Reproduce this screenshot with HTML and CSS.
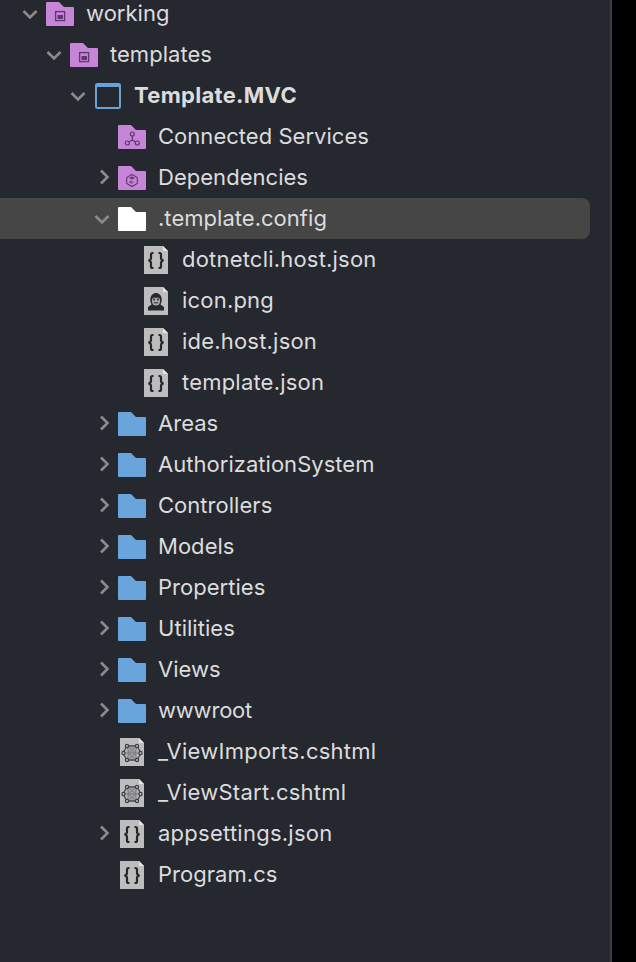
FILE: index.html
```html
<!DOCTYPE html>
<html lang="en">
<head>
<meta charset="utf-8">
<title>Solution tree</title>
<link rel="stylesheet" href="styles.css">
</head>
<body>
<svg class="defs" width="0" height="0" aria-hidden="true">
  <defs>
    <path id="folder" d="M1 0H13L18 5H27A1 1 0 0 1 28 6V23A1 1 0 0 1 27 24H1A1 1 0 0 1 0 23V1A1 1 0 0 1 1 0Z"/>
    <path id="sheet" d="M0 0H19L24 5V28H0Z"/>
    <g id="open"><path d="M1.500 2L8 8.500L14.500 2" fill="none" stroke="#8b8b8b" stroke-width="2.600"/></g>
    <g id="closed"><path d="M2 1.500L8.500 8L2 14.500" fill="none" stroke="#8b8b8b" stroke-width="2.600"/></g>
    <g id="braces" fill="none" stroke="#26282f" stroke-width="2.200">
      <path d="M9.500 7H8.500Q7 7 7 8.500V12Q7 14 4.500 14.500Q7 15 7 17V20.500Q7 22 8.500 22H9.500"/>
      <path d="M14.500 7H15.500Q17 7 17 8.500V12Q17 14 19.500 14.500Q17 15 17 17V20.500Q17 22 15.500 22H14.500"/>
    </g>
    <g id="sheet-corner"><path d="M19 0L24 5H19Z" fill="#e6e6e6"/></g>
    <g id="razor" fill="none">
      <circle cx="12" cy="15" r="6" fill="#a2a2a2"/>
      <path d="M7 8H17L21 15L17 22H7L3 15Z" stroke="#46484d" stroke-width="1.300"/>
      <path d="M7 8L12 11.500L17 8M3 15H21M7 22L12 18.500L17 22M7 8L9 15L7 22M17 8L15 15L17 22M9 15L12 11.500L15 15L12 18.500Z" stroke="#7d7f82" stroke-width="1"/>
      <g fill="#bdbdbd" stroke="#3b3d42" stroke-width="1.200">
        <circle cx="7" cy="8" r="1.600"/><circle cx="17" cy="8" r="1.600"/>
        <circle cx="3.500" cy="15" r="1.600"/><circle cx="20.500" cy="15" r="1.600"/>
        <circle cx="7" cy="22" r="1.600"/><circle cx="17" cy="22" r="1.600"/>
      </g>
    </g>
  </defs>
</svg>
<main class="window">
  <nav class="tree">
    <div class="row lvl-0">
      <svg class="chev" width="24" height="18" viewBox="-4 -4 24 18"><use href="#open"/></svg>
      <span class="icon"><svg width="28" height="24" viewBox="0 0 28 24"><use href="#folder" fill="#c685d8"/><g fill="none" stroke="#5c3a6b" stroke-width="1.300"><rect x="9.600" y="9.600" width="9" height="9"/></g><rect x="11.500" y="13" width="5.500" height="4" fill="#5c3a6b"/></svg></span>
      <span class="label">working</span>
    </div>
    <div class="row lvl-1">
      <svg class="chev" width="24" height="18" viewBox="-4 -4 24 18"><use href="#open"/></svg>
      <span class="icon"><svg width="28" height="24" viewBox="0 0 28 24"><use href="#folder" fill="#c685d8"/><g fill="none" stroke="#5c3a6b" stroke-width="1.300"><rect x="9.600" y="9.600" width="9" height="9"/></g><rect x="11.500" y="13" width="5.500" height="4" fill="#5c3a6b"/></svg></span>
      <span class="label">templates</span>
    </div>
    <div class="row lvl-2">
      <svg class="chev" width="24" height="18" viewBox="-4 -4 24 18"><use href="#open"/></svg>
      <span class="icon"><svg width="26" height="26" viewBox="0 0 26 26"><rect x="1" y="1" width="24" height="24" rx="1.500" fill="none" stroke="#66a3d9" stroke-width="2"/><rect x="1" y="1" width="24" height="3" fill="#66a3d9"/></svg></span>
      <span class="label label-bold">Template.MVC</span>
    </div>
    <div class="row lvl-3">
      <span class="chev"></span>
      <span class="icon"><svg width="28" height="24" viewBox="0 0 28 24"><use href="#folder" fill="#c685d8"/><g fill="none" stroke="#5c3a6b" stroke-width="1.200"><circle cx="14.300" cy="9" r="2"/><circle cx="9.300" cy="18" r="2"/><circle cx="19.300" cy="18" r="2"/><path d="M14.300 11V15M14.300 15L11 17M14.300 15L17.600 17"/></g></svg></span>
      <span class="label">Connected Services</span>
    </div>
    <div class="row lvl-3">
      <svg class="chev" width="24" height="18" viewBox="-9 0 24 18"><use href="#closed"/></svg>
      <span class="icon"><svg width="28" height="24" viewBox="0 0 28 24"><use href="#folder" fill="#c685d8"/><g fill="none" stroke="#5c3a6b" stroke-width="1.100"><path d="M14 8.500L19.300 11.500V17.500L14 20.500L8.700 17.500V11.500Z"/></g><path d="M11 12L14 13.500L17 12L14 10.500ZM13.500 14.500V18L11 16ZM14.500 14.500V18L15.500 16Z" fill="#5c3a6b"/></svg></span>
      <span class="label">Dependencies</span>
    </div>
    <div class="row lvl-3 row-selected">
      <svg class="chev" width="24" height="18" viewBox="-4 -4 24 18"><use href="#open"/></svg>
      <span class="icon"><svg width="28" height="24" viewBox="0 0 28 24"><use href="#folder" fill="#fff"/></svg></span>
      <span class="label">.template.config</span>
    </div>
    <div class="row lvl-4">
      <span class="chev"></span>
      <span class="icon"><svg width="24" height="28" viewBox="0 0 24 28"><use href="#sheet" fill="#bdbdbd"/><use href="#sheet-corner"/><use href="#braces"/></svg></span>
      <span class="label">dotnetcli.host.json</span>
    </div>
    <div class="row lvl-4">
      <span class="chev"></span>
      <span class="icon"><svg width="24" height="28" viewBox="0 0 24 28"><use href="#sheet" fill="#bdbdbd"/><use href="#sheet-corner"/><path d="M4 23.500V20L7.500 17.500Q5.500 14 6.500 10.500Q8 6 12 6Q16 6 17.500 10.500Q18.500 14 16.500 17.500L20 20V23.500Z" fill="#26282f"/><path d="M8 12Q10 9.800 12 11Q14 9.800 16 12V15Q15.500 18.500 12 18.500Q8.500 18.500 8 15Z" fill="#a9a9a9"/><circle cx="10" cy="12.500" r="1" fill="#26282f"/><circle cx="14" cy="12.500" r="1" fill="#26282f"/><path d="M9.800 15.800H14.200" stroke="#26282f"/></svg></span>
      <span class="label">icon.png</span>
    </div>
    <div class="row lvl-4">
      <span class="chev"></span>
      <span class="icon"><svg width="24" height="28" viewBox="0 0 24 28"><use href="#sheet" fill="#bdbdbd"/><use href="#sheet-corner"/><use href="#braces"/></svg></span>
      <span class="label">ide.host.json</span>
    </div>
    <div class="row lvl-4">
      <span class="chev"></span>
      <span class="icon"><svg width="24" height="28" viewBox="0 0 24 28"><use href="#sheet" fill="#bdbdbd"/><use href="#sheet-corner"/><use href="#braces"/></svg></span>
      <span class="label">template.json</span>
    </div>
    <div class="row lvl-3">
      <svg class="chev" width="24" height="18" viewBox="-9 0 24 18"><use href="#closed"/></svg>
      <span class="icon"><svg width="28" height="24" viewBox="0 0 28 24"><use href="#folder" fill="#69a5dc"/></svg></span>
      <span class="label">Areas</span>
    </div>
    <div class="row lvl-3">
      <svg class="chev" width="24" height="18" viewBox="-9 0 24 18"><use href="#closed"/></svg>
      <span class="icon"><svg width="28" height="24" viewBox="0 0 28 24"><use href="#folder" fill="#69a5dc"/></svg></span>
      <span class="label">AuthorizationSystem</span>
    </div>
    <div class="row lvl-3">
      <svg class="chev" width="24" height="18" viewBox="-9 0 24 18"><use href="#closed"/></svg>
      <span class="icon"><svg width="28" height="24" viewBox="0 0 28 24"><use href="#folder" fill="#69a5dc"/></svg></span>
      <span class="label">Controllers</span>
    </div>
    <div class="row lvl-3">
      <svg class="chev" width="24" height="18" viewBox="-9 0 24 18"><use href="#closed"/></svg>
      <span class="icon"><svg width="28" height="24" viewBox="0 0 28 24"><use href="#folder" fill="#69a5dc"/></svg></span>
      <span class="label">Models</span>
    </div>
    <div class="row lvl-3">
      <svg class="chev" width="24" height="18" viewBox="-9 0 24 18"><use href="#closed"/></svg>
      <span class="icon"><svg width="28" height="24" viewBox="0 0 28 24"><use href="#folder" fill="#69a5dc"/></svg></span>
      <span class="label">Properties</span>
    </div>
    <div class="row lvl-3">
      <svg class="chev" width="24" height="18" viewBox="-9 0 24 18"><use href="#closed"/></svg>
      <span class="icon"><svg width="28" height="24" viewBox="0 0 28 24"><use href="#folder" fill="#69a5dc"/></svg></span>
      <span class="label">Utilities</span>
    </div>
    <div class="row lvl-3">
      <svg class="chev" width="24" height="18" viewBox="-9 0 24 18"><use href="#closed"/></svg>
      <span class="icon"><svg width="28" height="24" viewBox="0 0 28 24"><use href="#folder" fill="#69a5dc"/></svg></span>
      <span class="label">Views</span>
    </div>
    <div class="row lvl-3">
      <svg class="chev" width="24" height="18" viewBox="-9 0 24 18"><use href="#closed"/></svg>
      <span class="icon"><svg width="28" height="24" viewBox="0 0 28 24"><use href="#folder" fill="#69a5dc"/></svg></span>
      <span class="label label-tight">wwwroot</span>
    </div>
    <div class="row lvl-3">
      <span class="chev"></span>
      <span class="icon"><svg width="24" height="28" viewBox="0 0 24 28"><use href="#sheet" fill="#bdbdbd"/><use href="#sheet-corner"/><use href="#razor"/></svg></span>
      <span class="label label-wide">_ViewImports.cshtml</span>
    </div>
    <div class="row lvl-3">
      <span class="chev"></span>
      <span class="icon"><svg width="24" height="28" viewBox="0 0 24 28"><use href="#sheet" fill="#bdbdbd"/><use href="#sheet-corner"/><use href="#razor"/></svg></span>
      <span class="label label-wide">_ViewStart.cshtml</span>
    </div>
    <div class="row lvl-3">
      <svg class="chev" width="24" height="18" viewBox="-9 0 24 18"><use href="#closed"/></svg>
      <span class="icon"><svg width="24" height="28" viewBox="0 0 24 28"><use href="#sheet" fill="#bdbdbd"/><use href="#sheet-corner"/><use href="#braces"/></svg></span>
      <span class="label label-wide">appsettings.json</span>
    </div>
    <div class="row lvl-3">
      <span class="chev"></span>
      <span class="icon"><svg width="24" height="28" viewBox="0 0 24 28"><use href="#sheet" fill="#bdbdbd"/><use href="#sheet-corner"/><use href="#braces"/></svg></span>
      <span class="label">Program.cs</span>
    </div>
  </nav>
</main>
</body>
</html>
```
FILE: styles.css
```css
html, body {
  margin: 0;
  height: 100%;
  background: #000;
  overflow: hidden;
}
.defs {
  display: block;
  height: 0;
}
.window {
  box-sizing: border-box;
  width: 612px;
  height: 962px;
  background: #26282f;
  border-right: 2px solid #3b3d43;
  overflow: hidden;
  font-family: Inter, "Noto Sans", sans-serif;
  font-size: 22px;
  color: #dcdcdc;
  letter-spacing: 0.03px;
}
.tree {
  margin-top: -7px;
  margin-right: 20px;
}
.row {
  display: flex;
  align-items: center;
  height: 41px;
}
.row-selected {
  background: #464646;
  border-radius: 0 8px 8px 0;
}
.lvl-0 { padding-left: 18px; }
.lvl-1 { padding-left: 42px; }
.lvl-2 { padding-left: 66px; }
.lvl-3 { padding-left: 90px; }
.lvl-4 { padding-left: 114px; }
.chev {
  flex: none;
  display: block;
  width: 24px;
  height: 18px;
}
.icon {
  flex: none;
  display: flex;
  justify-content: center;
  align-items: center;
  width: 28px;
  margin-left: 4px;
}
.icon svg {
  display: block;
}
.label {
  margin-left: 12px;
  margin-bottom: 2px;
  white-space: nowrap;
}
.label-bold {
  font-weight: 700;
  letter-spacing: 0.3px;
}
.label-tight {
  letter-spacing: -0.2px;
}
.label-wide {
  letter-spacing: 0.25px;
}
.lvl-4 .label {
  letter-spacing: 0.2px;
}
```
